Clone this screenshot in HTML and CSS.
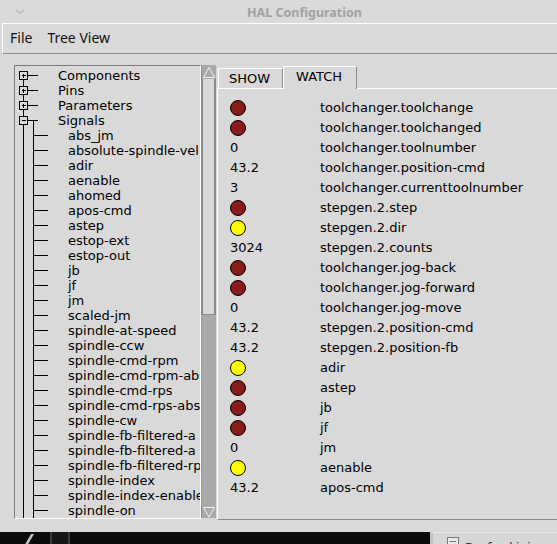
FILE: index.html
```html
<!DOCTYPE html>
<html>
<head>
<meta charset="utf-8">
<title>HAL Configuration</title>
<link rel="stylesheet" href="styles.css">
</head>
<body>
<div class="titlebar">
  <svg class="chev" width="10" height="6" viewBox="0 0 10 6"><path d="M1 1 L5 4.5 L9 1" fill="none" stroke="#b4b4b4" stroke-width="1.2"/></svg>
  <span class="title">HAL Configuration</span>
</div>
<div class="menubar">
  <span class="menu">File</span>
  <span class="menu">Tree View</span>
</div>
<div class="main">
  <div class="treepane">
    <div class="tree">
      <div class="row top"><svg class="g1" width="43" height="15" shape-rendering="crispEdges"><path d="M8.5 11.5V15M12.5 7.5H23" stroke="#000" fill="none"/><rect x="4.5" y="3.5" width="8" height="8" fill="none" stroke="#000"/><path d="M6.5 7.5H11M8.5 5.5V10" stroke="#000"/></svg><span>Components</span></div>
      <div class="row top"><svg class="g1" width="43" height="15" shape-rendering="crispEdges"><path d="M8.5 0V3.5M8.5 11.5V15M12.5 7.5H23" stroke="#000" fill="none"/><rect x="4.5" y="3.5" width="8" height="8" fill="none" stroke="#000"/><path d="M6.5 7.5H11M8.5 5.5V10" stroke="#000"/></svg><span>Pins</span></div>
      <div class="row top"><svg class="g1" width="43" height="15" shape-rendering="crispEdges"><path d="M8.5 0V3.5M8.5 11.5V15M12.5 7.5H23" stroke="#000" fill="none"/><rect x="4.5" y="3.5" width="8" height="8" fill="none" stroke="#000"/><path d="M6.5 7.5H11M8.5 5.5V10" stroke="#000"/></svg><span>Parameters</span></div>
      <div class="row top"><svg class="g1" width="43" height="15" shape-rendering="crispEdges"><path d="M8.5 0V3.5M8.5 11.5V15M12.5 7.5H23M18.5 7.5V15" stroke="#000" fill="none"/><rect x="4.5" y="3.5" width="8" height="8" fill="none" stroke="#000"/><path d="M6.5 7.5H11" stroke="#000"/></svg><span>Signals</span></div>
      <div class="row child"><svg class="g2" width="53" height="15" shape-rendering="crispEdges"><path d="M8.5 0V15M18.5 0V15M18.5 7.5H33" stroke="#000" fill="none"/></svg><span>abs_jm</span></div>
      <div class="row child"><svg class="g2" width="53" height="15" shape-rendering="crispEdges"><path d="M8.5 0V15M18.5 0V15M18.5 7.5H33" stroke="#000" fill="none"/></svg><span>absolute-spindle-vel</span></div>
      <div class="row child"><svg class="g2" width="53" height="15" shape-rendering="crispEdges"><path d="M8.5 0V15M18.5 0V15M18.5 7.5H33" stroke="#000" fill="none"/></svg><span>adir</span></div>
      <div class="row child"><svg class="g2" width="53" height="15" shape-rendering="crispEdges"><path d="M8.5 0V15M18.5 0V15M18.5 7.5H33" stroke="#000" fill="none"/></svg><span>aenable</span></div>
      <div class="row child"><svg class="g2" width="53" height="15" shape-rendering="crispEdges"><path d="M8.5 0V15M18.5 0V15M18.5 7.5H33" stroke="#000" fill="none"/></svg><span>ahomed</span></div>
      <div class="row child"><svg class="g2" width="53" height="15" shape-rendering="crispEdges"><path d="M8.5 0V15M18.5 0V15M18.5 7.5H33" stroke="#000" fill="none"/></svg><span>apos-cmd</span></div>
      <div class="row child"><svg class="g2" width="53" height="15" shape-rendering="crispEdges"><path d="M8.5 0V15M18.5 0V15M18.5 7.5H33" stroke="#000" fill="none"/></svg><span>astep</span></div>
      <div class="row child"><svg class="g2" width="53" height="15" shape-rendering="crispEdges"><path d="M8.5 0V15M18.5 0V15M18.5 7.5H33" stroke="#000" fill="none"/></svg><span>estop-ext</span></div>
      <div class="row child"><svg class="g2" width="53" height="15" shape-rendering="crispEdges"><path d="M8.5 0V15M18.5 0V15M18.5 7.5H33" stroke="#000" fill="none"/></svg><span>estop-out</span></div>
      <div class="row child"><svg class="g2" width="53" height="15" shape-rendering="crispEdges"><path d="M8.5 0V15M18.5 0V15M18.5 7.5H33" stroke="#000" fill="none"/></svg><span>jb</span></div>
      <div class="row child"><svg class="g2" width="53" height="15" shape-rendering="crispEdges"><path d="M8.5 0V15M18.5 0V15M18.5 7.5H33" stroke="#000" fill="none"/></svg><span>jf</span></div>
      <div class="row child"><svg class="g2" width="53" height="15" shape-rendering="crispEdges"><path d="M8.5 0V15M18.5 0V15M18.5 7.5H33" stroke="#000" fill="none"/></svg><span>jm</span></div>
      <div class="row child"><svg class="g2" width="53" height="15" shape-rendering="crispEdges"><path d="M8.5 0V15M18.5 0V15M18.5 7.5H33" stroke="#000" fill="none"/></svg><span>scaled-jm</span></div>
      <div class="row child"><svg class="g2" width="53" height="15" shape-rendering="crispEdges"><path d="M8.5 0V15M18.5 0V15M18.5 7.5H33" stroke="#000" fill="none"/></svg><span>spindle-at-speed</span></div>
      <div class="row child"><svg class="g2" width="53" height="15" shape-rendering="crispEdges"><path d="M8.5 0V15M18.5 0V15M18.5 7.5H33" stroke="#000" fill="none"/></svg><span>spindle-ccw</span></div>
      <div class="row child"><svg class="g2" width="53" height="15" shape-rendering="crispEdges"><path d="M8.5 0V15M18.5 0V15M18.5 7.5H33" stroke="#000" fill="none"/></svg><span>spindle-cmd-rpm</span></div>
      <div class="row child"><svg class="g2" width="53" height="15" shape-rendering="crispEdges"><path d="M8.5 0V15M18.5 0V15M18.5 7.5H33" stroke="#000" fill="none"/></svg><span>spindle-cmd-rpm-abs</span></div>
      <div class="row child"><svg class="g2" width="53" height="15" shape-rendering="crispEdges"><path d="M8.5 0V15M18.5 0V15M18.5 7.5H33" stroke="#000" fill="none"/></svg><span>spindle-cmd-rps</span></div>
      <div class="row child"><svg class="g2" width="53" height="15" shape-rendering="crispEdges"><path d="M8.5 0V15M18.5 0V15M18.5 7.5H33" stroke="#000" fill="none"/></svg><span>spindle-cmd-rps-abs</span></div>
      <div class="row child"><svg class="g2" width="53" height="15" shape-rendering="crispEdges"><path d="M8.5 0V15M18.5 0V15M18.5 7.5H33" stroke="#000" fill="none"/></svg><span>spindle-cw</span></div>
      <div class="row child"><svg class="g2" width="53" height="15" shape-rendering="crispEdges"><path d="M8.5 0V15M18.5 0V15M18.5 7.5H33" stroke="#000" fill="none"/></svg><span>spindle-fb-filtered-a</span></div>
      <div class="row child"><svg class="g2" width="53" height="15" shape-rendering="crispEdges"><path d="M8.5 0V15M18.5 0V15M18.5 7.5H33" stroke="#000" fill="none"/></svg><span>spindle-fb-filtered-a</span></div>
      <div class="row child"><svg class="g2" width="53" height="15" shape-rendering="crispEdges"><path d="M8.5 0V15M18.5 0V15M18.5 7.5H33" stroke="#000" fill="none"/></svg><span>spindle-fb-filtered-rps</span></div>
      <div class="row child"><svg class="g2" width="53" height="15" shape-rendering="crispEdges"><path d="M8.5 0V15M18.5 0V15M18.5 7.5H33" stroke="#000" fill="none"/></svg><span>spindle-index</span></div>
      <div class="row child"><svg class="g2" width="53" height="15" shape-rendering="crispEdges"><path d="M8.5 0V15M18.5 0V15M18.5 7.5H33" stroke="#000" fill="none"/></svg><span>spindle-index-enable</span></div>
      <div class="row child"><svg class="g2" width="53" height="15" shape-rendering="crispEdges"><path d="M8.5 0V15M18.5 0V15M18.5 7.5H33" stroke="#000" fill="none"/></svg><span>spindle-on</span></div>
    </div>
    <div class="vscroll">
      <div class="sb-btn"><svg width="14" height="13" viewBox="0 0 14 13"><path d="M7 1.5 L12.5 11.5 H1.5 Z" fill="none" stroke="#f2f2f2" stroke-width="1"/></svg></div>
      <div class="sb-track"></div>
      <div class="sb-thumb"></div>
      <div class="sb-btn down"><svg width="14" height="11" viewBox="0 0 14 11"><path d="M1.5 0.5 H12.5 L7 10 Z" fill="none" stroke="#f2f2f2" stroke-width="1"/></svg></div>
    </div>
  </div>
  <div class="notebook">
    <div class="tabs">
      <div class="tab">SHOW</div>
      <div class="tab active">WATCH</div>
    </div>
    <div class="panel">
      <div class="wrow"><span class="val"><span class="led off"></span></span><span class="name">toolchanger.toolchange</span></div>
      <div class="wrow"><span class="val"><span class="led off"></span></span><span class="name">toolchanger.toolchanged</span></div>
      <div class="wrow"><span class="val">0</span><span class="name">toolchanger.toolnumber</span></div>
      <div class="wrow"><span class="val">43.2</span><span class="name">toolchanger.position-cmd</span></div>
      <div class="wrow"><span class="val">3</span><span class="name">toolchanger.currenttoolnumber</span></div>
      <div class="wrow"><span class="val"><span class="led off"></span></span><span class="name">stepgen.2.step</span></div>
      <div class="wrow"><span class="val"><span class="led on"></span></span><span class="name">stepgen.2.dir</span></div>
      <div class="wrow"><span class="val">3024</span><span class="name">stepgen.2.counts</span></div>
      <div class="wrow"><span class="val"><span class="led off"></span></span><span class="name">toolchanger.jog-back</span></div>
      <div class="wrow"><span class="val"><span class="led off"></span></span><span class="name">toolchanger.jog-forward</span></div>
      <div class="wrow"><span class="val">0</span><span class="name">toolchanger.jog-move</span></div>
      <div class="wrow"><span class="val">43.2</span><span class="name">stepgen.2.position-cmd</span></div>
      <div class="wrow"><span class="val">43.2</span><span class="name">stepgen.2.position-fb</span></div>
      <div class="wrow"><span class="val"><span class="led on"></span></span><span class="name">adir</span></div>
      <div class="wrow"><span class="val"><span class="led off"></span></span><span class="name">astep</span></div>
      <div class="wrow"><span class="val"><span class="led off"></span></span><span class="name">jb</span></div>
      <div class="wrow"><span class="val"><span class="led off"></span></span><span class="name">jf</span></div>
      <div class="wrow"><span class="val">0</span><span class="name">jm</span></div>
      <div class="wrow"><span class="val"><span class="led on"></span></span><span class="name">aenable</span></div>
      <div class="wrow"><span class="val">43.2</span><span class="name">apos-cmd</span></div>
    </div>
  </div>
</div>
<div class="desktop">
  <div class="dk-left">
    <span class="dk-slash"></span>
    <span class="dk-bar"></span>
  </div>
  <div class="taskbar">
    <svg class="tb-icon" width="12" height="14" viewBox="0 0 12 14"><rect x="0.5" y="0.5" width="11" height="13" fill="#e8e8e8" stroke="#777"/><path d="M2.5 4.5H9" stroke="#777"/></svg>
    <span class="tb-text">Rayford.ini</span>
    <span class="tb-x">×</span>
  </div>
</div>
</body>
</html>
```
FILE: styles.css
```css
* { box-sizing: border-box; }
html, body {
  margin: 0;
  padding: 0;
}
body {
  width: 557px;
  height: 544px;
  overflow: hidden;
  background: #d9d9d9;
  font-family: "DejaVu Sans", sans-serif;
  font-size: 13px;
  color: #000;
  display: flex;
  flex-direction: column;
}
.titlebar {
  height: 23px;
  flex: 0 0 23px;
  background: #dadada;
  position: relative;
  display: flex;
  align-items: center;
  justify-content: center;
}
.chev {
  position: absolute;
  left: 15px;
  top: 9px;
}
.title {
  font-family: "Noto Sans", sans-serif;
  font-weight: bold;
  font-size: 12.5px;
  color: #a2a2a2;
  margin-left: 52px;
  margin-top: 1px;
}
.menubar {
  height: 31px;
  flex: 0 0 31px;
  margin-left: 2px;
  border-top: 1px solid #ffffff;
  border-left: 1px solid #ffffff;
  border-bottom: 1px solid #8c8c8c;
  display: flex;
  align-items: center;
  padding-left: 7px;
  gap: 15px;
  font-family: "Noto Sans", sans-serif;
  font-size: 14px;
  color: #111;
}
.menu { line-height: 20px; margin-top: -1px; }
.main {
  flex: 0 0 478px;
  height: 478px;
  display: flex;
  align-items: flex-start;
  padding-top: 11px;
}
.treepane {
  display: flex;
  margin-left: 14px;
}
.tree {
  width: 187px;
  height: 454px;
  border-top: 1px solid #7a7a7a;
  border-left: 1px solid #7a7a7a;
  border-right: 1px solid #ffffff;
  border-bottom: 1px solid #ffffff;
  padding-top: 2px;
  overflow: hidden;
}
.row {
  height: 15px;
  display: flex;
  align-items: center;
  white-space: nowrap;
  line-height: 15px;
}
.row svg { flex: 0 0 auto; display: block; }
.row span { flex: 0 0 auto; }
.vscroll {
  width: 15px;
  height: 453px;
  display: flex;
  flex-direction: column;
}
.sb-btn {
  height: 14px;
  flex: 0 0 14px;
  background: #a9a9a9;
  border-left: 1px solid #8a8a8a;
  display: flex;
  align-items: center;
  justify-content: center;
}
.sb-btn.down {
  height: 11px;
  flex: 0 0 11px;
  align-items: flex-start;
}
.sb-track {
  flex: 0 0 235px;
  border-left: 2px solid #8a8a8a;
  border-right: 2px solid #8a8a8a;
  background: #d9d9d9;
}
.sb-thumb {
  flex: 1 1 auto;
  background: #aaaaaa;
  border-top: 1px solid #8a8a8a;
  border-left: 1px solid #9a9a9a;
}
.notebook {
  margin-left: 1px;
  flex: 1 1 auto;
  display: flex;
  flex-direction: column;
}
.tabs {
  height: 23px;
  display: flex;
  align-items: flex-end;
  padding-left: 1px;
  position: relative;
  z-index: 1;
}
.tab {
  height: 20px;
  border-top: 1px solid #ffffff;
  border-left: 1px solid #ffffff;
  border-right: 1px solid #8a8a8a;
  padding: 0 11px 0 10px;
  line-height: 20px;
  width: 65px;
}
.tab.active {
  height: 23px;
  width: 74px;
  margin-bottom: -1px;
  background: #d9d9d9;
  padding: 0 12px 0 12px;
  line-height: 20px;
}
.panel {
  height: 432px;
  border-top: 1px solid #ffffff;
  border-left: 1px solid #ffffff;
  border-bottom: 1px solid #8a8a8a;
  padding-top: 9px;
  padding-left: 12px;
}
.wrow {
  height: 20px;
  display: flex;
  align-items: center;
  line-height: 20px;
  white-space: nowrap;
}
.val {
  width: 90px;
  flex: 0 0 90px;
  display: flex;
  align-items: center;
}
.led {
  width: 16px;
  height: 16px;
  border-radius: 50%;
  border: 1px solid #000;
  display: block;
}
.led.off { background: #8b1a1a; }
.led.on { background: #ffff00; }
.desktop {
  flex: 0 0 12px;
  height: 12px;
  display: flex;
  background: #0b0b0b;
}
.dk-left {
  width: 430px;
  position: relative;
}
.dk-slash {
  position: absolute;
  left: 27px;
  top: 2px;
  width: 3px;
  height: 14px;
  background: #bdbdbd;
  transform: skewX(-30deg);
}
.dk-bar {
  position: absolute;
  left: 50px;
  top: 0;
  width: 20px;
  height: 12px;
  border-left: 2px solid #3a3a3a;
  border-right: 2px solid #3a3a3a;
  background: #161616;
}
.taskbar {
  flex: 1 1 auto;
  background: #d6d6d6;
  border-left: 3px solid #c2c2c2;
  border-top: 1px solid #e6e6e6;
  display: flex;
  align-items: flex-start;
  padding-left: 14px;
  padding-top: 4px;
  gap: 6px;
  font-family: "Noto Sans", sans-serif;
  font-size: 13px;
  color: #333;
  overflow: hidden;
}
.tb-icon { flex: 0 0 auto; }
.tb-text { line-height: 18px; margin-top: 1px; }
.tb-x { line-height: 18px; margin-top: 0; }
```
